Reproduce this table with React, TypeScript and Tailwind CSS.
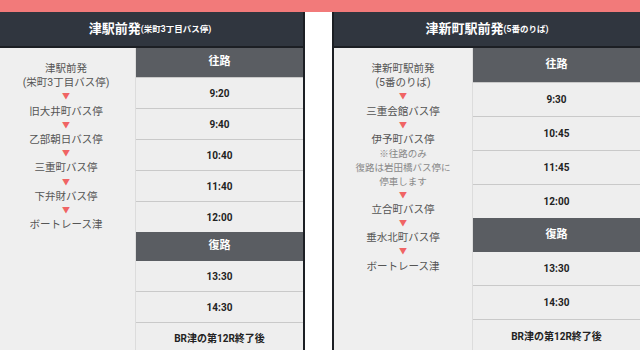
import React from 'react';

type Stop = { name: string; note?: string[] };

interface Timetable {
  title: string;
  sub: string;
  stops: Stop[];
  outbound: string[];
  inbound: string[];
  headH: string;
  rowH: string;
}

const tables: Timetable[] = [
  {
    title: '津駅前発',
    sub: '(栄町3丁目バス停)',
    stops: [
      { name: '津駅前発\n(栄町3丁目バス停)' },
      { name: '旧大井町バス停' },
      { name: '乙部朝日バス停' },
      { name: '三重町バス停' },
      { name: '下弁財バス停' },
      { name: 'ボートレース津' },
    ],
    outbound: ['9:20', '9:40', '10:40', '11:40', '12:00'],
    inbound: ['13:30', '14:30', 'BR津の第12R終了後'],
    headH: 'h-[29px]',
    rowH: 'h-[31px]',
  },
  {
    title: '津新町駅前発',
    sub: '(5番のりば)',
    stops: [
      { name: '津新町駅前発\n(5番のりば)' },
      { name: '三重会館バス停' },
      { name: '伊予町バス停', note: ['※往路のみ', '復路は岩田橋バス停に', '停車します'] },
      { name: '立合町バス停' },
      { name: '垂水北町バス停' },
      { name: 'ボートレース津' },
    ],
    outbound: ['9:30', '10:45', '11:45', '12:00'],
    inbound: ['13:30', '14:30', 'BR津の第12R終了後'],
    headH: 'h-[34px]',
    rowH: 'h-[34px]',
  },
];

function Panel({ t }: { t: Timetable }) {
  return (
    <div className="w-[310px] shrink-0 border-x-2 border-[#1c1f24]">
      {/* Title bar */}
      <div className="h-[36px] bg-[#30363f] border-b-2 border-[#1c1f24] flex items-center justify-center text-white font-bold">
        <span className="text-[13px]">{t.title}</span>
        <span className="text-[8.5px]">{t.sub}</span>
      </div>

      <div className="flex">
        {/* Route */}
        <div className="w-[139px] shrink-0 bg-[#efefef] border-r border-[#dcdcdc] pt-[14px] flex flex-col items-center text-center text-[10.5px] leading-[14.2px] text-[#555]">
          {t.stops.map((s, i) => (
            <React.Fragment key={i}>
              {i > 0 && <div className="text-[8px] leading-[14.2px] text-[#f06464]">▼</div>}
              <div className="whitespace-pre-line">{s.name}</div>
              {s.note && (
                <div className="text-[9.5px] leading-[13.8px] text-[#888]">
                  {s.note.map((n) => (
                    <div key={n}>{n}</div>
                  ))}
                </div>
              )}
            </React.Fragment>
          ))}
        </div>

        {/* Times */}
        <div className="flex-1 flex flex-col text-[10px] font-bold text-[#222]">
          <div className={`${t.headH} bg-[#5a5d62] flex items-center justify-center text-white text-[11px]`}>往路</div>
          {t.outbound.map((v) => (
            <div key={v} className={`${t.rowH} bg-[#eeeeee] border-t border-[#c9c9c9] flex items-center justify-center`}>
              {v}
            </div>
          ))}
          <div className={`${t.headH} bg-[#5a5d62] flex items-center justify-center text-white text-[11px]`}>復路</div>
          {t.inbound.map((v) => (
            <div key={v} className={`${t.rowH} bg-[#eeeeee] border-b border-[#c9c9c9] flex items-center justify-center`}>
              {v}
            </div>
          ))}
        </div>
      </div>
    </div>
  );
}

export default function App() {
  return (
    <div className="w-[640px] h-[350px] overflow-hidden bg-white font-['Roboto','Noto_Sans_CJK_JP',sans-serif]">
      <div className="h-[12px] bg-[#f27a7a]" />
      <div className="flex gap-[27px] -ml-[5px]">
        {tables.map((t) => (
          <Panel key={t.title} t={t} />
        ))}
      </div>
    </div>
  );
}
